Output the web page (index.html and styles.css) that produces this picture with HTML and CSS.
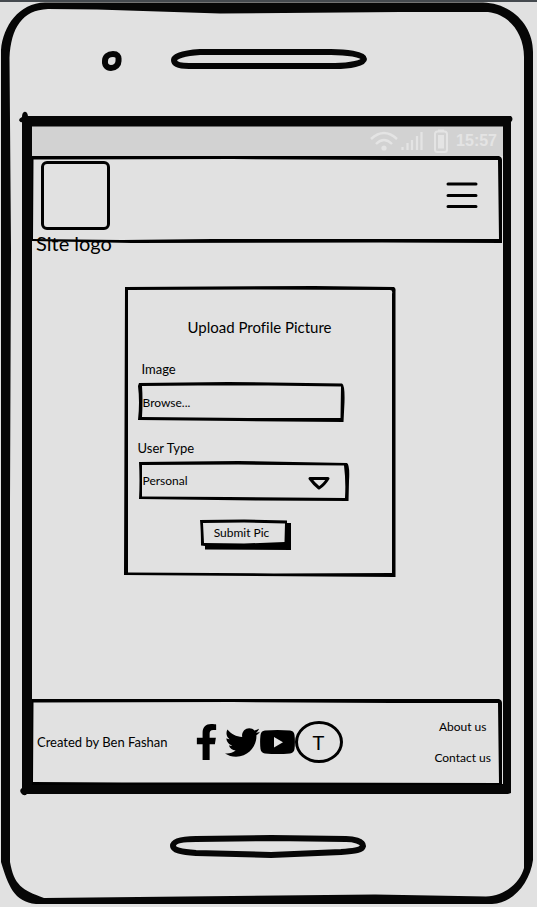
FILE: index.html
```html
<!DOCTYPE html>
<html lang="en">
<head>
<meta charset="utf-8">
<meta name="viewport" content="width=device-width, initial-scale=1">
<title>Upload Profile Picture</title>
<link rel="stylesheet" href="styles.css">
</head>
<body>
<div class="phone">
  <svg class="sketch" viewBox="0 2 537 905" preserveAspectRatio="none" aria-hidden="true">
    <path fill="#060606" fill-rule="evenodd" d="M1 50C3 26 19 3 45 2.500L483 2.500C510 3 533 24 533 52L533 860C530 882 514 903 492 904L36 904C14 902 8 885 1 862ZM9.500 58C11 28 22 10 48 9L97 9.500L220 13.500L400 12L488 12C508 14 524 32 524 57L524 868C520 882 506 896 486 896.500L375 894.500L44 898C22 890 14 885 10 862L10 500L11 250Z"/>
  </svg>

  <div class="bezel bezel-top">
    <svg class="camera" viewBox="0 0 20 20" aria-hidden="true"><path d="M11 3C15 3 17 5 16.500 9C17 14 13 17 9 17C5 17 2.500 14 3 10C3 6 6 3 11 3Z"/></svg>
    <svg class="speaker" viewBox="0 0 197 24" aria-hidden="true"><path d="M30 4C15 5 4 8 4 12C4 16 9 18 19 18L165 18C180 18 194 15 194 11C194 6 175 4 161 4Z"/></svg>
  </div>

  <div class="screen">
    <svg class="sketch" viewBox="0 0 490 678" preserveAspectRatio="none" aria-hidden="true">
      <path fill="#060606" fill-rule="evenodd" d="M0 1Q-4 3-2.500 5Q-1 7 0 6V672Q-3 674-1 677Q2 681 5 678H486L489 677V6Q492 3 489 0H6Q5-5 2-4Q0-3 0 1ZM10 10.500H481V668H10Z"/>
    </svg>

    <div class="status">
      <svg width="28" height="20" viewBox="0 0 28 20" fill="none" stroke="#e4e4e4" stroke-width="2.400" role="img" aria-label="Wi-Fi"><path d="M1 8Q14-4 27 8M6 13Q14 5 22 13"/><circle cx="14" cy="17" r="2.600" fill="#e4e4e4" stroke="none"/></svg>
      <svg class="signal" width="22" height="20" viewBox="0 0 22 20" stroke="#e4e4e4" stroke-width="2.200" role="img" aria-label="Signal"><path d="M1.500 19V16M6.500 19V12M11 19V9M16 19V5M20.500 19V1"/></svg>
      <svg class="battery" width="14" height="24" viewBox="0 0 14 24" role="img" aria-label="Battery"><rect x="1" y="2.500" width="12" height="20.500" rx="2.500" fill="none" stroke="#e4e4e4" stroke-width="2"/><path d="M4 6H10V19.500H4ZM4 .5H10V2.500H4Z" fill="#e4e4e4"/></svg>
      <time>15:57</time>
    </div>

    <header class="site-header">
      <svg class="sketch" viewBox="0 0 470 86" preserveAspectRatio="none" aria-hidden="true">
        <path fill="#000" fill-rule="evenodd" d="M0 0H467Q470 1 470 4V87L350 86.500L100 87L0 85ZM1.500 3.500L200 3L360 4L466 4L467 83L180 83L90 84L1 83Z"/>
      </svg>
      <a class="brand" href="#">
        <span class="logo"></span>
        <span class="brand-name">Site logo</span>
      </a>
      <button class="menu" type="button" aria-label="Menu">
        <svg width="32" height="28" viewBox="0 0 32 28" stroke="#000" stroke-width="3" stroke-linecap="round" aria-hidden="true"><path d="M2 3H30M2 14.500H30M2 25.500H30"/></svg>
      </button>
    </header>

    <main>
      <form class="card">
        <svg class="sketch" viewBox="0 0 272 290" preserveAspectRatio="none" aria-hidden="true">
          <path fill="#000" fill-rule="evenodd" d="M1 1L190 0L270 1Q272 2 271.500 5V290L200 289.500L0 288ZM4 4L130 3.500L266 4Q269 4 268 8V286L150 286.500L4 285.500Z"/>
        </svg>
        <h1>Upload Profile Picture</h1>
        <label class="label-inset" for="image">Image</label>
        <div class="field">
          <svg class="sketch" viewBox="0 0 210 40" preserveAspectRatio="none" aria-hidden="true">
            <path fill="#000" fill-rule="evenodd" d="M1 1L90 0L204 1.500Q207 3 206.500 20L205.500 40L100 39L0 38Q2 20 0 4ZM4 4L60 3.500L130 3.500L203 4.500L202.500 36L110 36L4 35Q5 18 4 4Z"/>
          </svg>
          <input id="image" type="text" value="Browse..." readonly>
        </div>
        <label for="user-type">User Type</label>
        <div class="field">
          <svg class="sketch" viewBox="0 0 210 40" preserveAspectRatio="none" aria-hidden="true">
            <path fill="#000" fill-rule="evenodd" d="M1 1L100 0L209 2Q212 4 211 20L210.500 40L120 39.500L1 38Q2 20 1 1ZM4 4L100 3.500L206 4.500Q208 20 207 37L90 36L4 35.500Q4 20 4 4Z"/>
          </svg>
          <select id="user-type"><option>Personal</option></select>
          <svg class="arrow" viewBox="0 0 24 16" aria-hidden="true"><path d="M3 3.500H21Q17 10 12 13Q7 9 3 3.500Z" fill="none" stroke="#000" stroke-width="3" stroke-linejoin="round"/></svg>
        </div>
        <button class="submit" type="submit">
          <svg class="sketch" viewBox="0 0 92 31" preserveAspectRatio="none" aria-hidden="true">
            <path fill="#000" fill-rule="evenodd" d="M1 1L45 .5L88 1.500V4H92V31L6 30.500V27L2 26.500Q2 12 1 1ZM4 4L45 3.500L86 4.500L85.500 23L45 24.500L5 24Z"/>
          </svg>
          <span>Submit Pic</span>
        </button>
      </form>
    </main>

    <footer>
      <svg class="sketch" viewBox="0 0 470 86" preserveAspectRatio="none" aria-hidden="true">
        <path fill="#000" fill-rule="evenodd" d="M0 0H467Q470 1 470 4V86H0ZM1.500 3.500L200 3L360 4L466 4L467 84L180 83.500L90 83.500L1 83Z"/>
      </svg>
      <p>Created by Ben Fashan</p>
      <nav class="social" aria-label="Social">
        <a class="facebook" href="#" aria-label="Facebook"><svg width="21" height="36" viewBox="18 0 284 512" aria-hidden="true"><path d="M279.140 288l14.220-92.660h-88.910v-60.130c0-25.350 12.420-50.060 52.240-50.060h40.420V6.260S260.430 0 225.360 0c-73.220 0-121.080 44.380-121.080 124.720v70.620H22.890V288h81.390v224h100.170V288z"/></svg></a>
        <a href="#" aria-label="Twitter"><svg width="35" height="35" viewBox="0 0 512 512" aria-hidden="true"><path d="M459.370 151.716c.325 4.548.325 9.097.325 13.645 0 138.720-105.583 298.558-298.558 298.558-59.452 0-114.680-17.219-161.137-47.106 8.447.974 16.568 1.299 25.340 1.299 49.055 0 94.213-16.568 130.274-44.832-46.132-.975-84.792-31.188-98.112-72.772 6.498.974 12.995 1.624 19.818 1.624 9.421 0 18.843-1.300 27.614-3.573-48.081-9.747-84.143-51.980-84.143-102.985v-1.299c13.969 7.797 30.214 12.670 47.431 13.319-28.264-18.843-46.781-51.005-46.781-87.391 0-19.492 5.197-37.360 14.294-52.954 51.655 63.675 129.300 105.258 216.365 109.807-1.624-7.797-2.599-15.918-2.599-24.040 0-57.828 46.782-104.934 104.934-104.934 30.213 0 57.502 12.670 76.670 33.137 23.715-4.548 46.456-13.320 66.599-25.340-7.798 24.366-24.366 44.833-46.132 57.827 21.117-2.273 41.584-8.122 60.426-16.243-14.292 20.791-32.161 39.308-52.628 54.253z"/></svg></a>
        <a href="#" aria-label="YouTube"><svg width="35" height="24" viewBox="0 0 35 24" aria-hidden="true"><path fill-rule="evenodd" d="M5 .6Q17.500-.6 30 .6Q34 1 34.500 5Q35.300 12 34.500 19Q34 23 30 23.400Q17.500 24.600 5 23.400Q1 23 .5 19Q-.3 12 .5 5Q1 1 5 .6ZM14 7V17.500L23 12.200Z"/></svg></a>
        <a class="round" href="#">T</a>
      </nav>
      <nav class="links" aria-label="Site">
        <a href="#">About us</a>
        <a href="#">Contact us</a>
      </nav>
    </footer>
  </div>

  <div class="bezel bezel-bottom">
    <svg class="speaker" viewBox="0 0 197 24" aria-hidden="true"><path d="M26 4C11 4 3 6 3 11C3 15 11 17 26 18L101 20L171 17C186 16 192 15 193 11C193 6 183 4 176 4L101 3Z"/></svg>
  </div>
</div>
</body>
</html>
```
FILE: styles.css
```css
* {
  box-sizing: border-box;
}

body {
  margin: 0;
  min-height: 100vh;
  display: flex;
  flex-direction: column;
  border-top: 2px solid #454a4f;
  background: #e1e1e1;
  color: #000;
  font: 13px/16px Lato, "Liberation Sans", sans-serif;
  font-variant-ligatures: none;
}

svg {
  display: block;
}

a {
  color: inherit;
  text-decoration: none;
}

.sketch {
  position: absolute;
  inset: 0;
  width: 100%;
  height: 100%;
  overflow: visible;
  pointer-events: none;
}

.phone {
  position: relative;
  flex: 1;
  display: flex;
  flex-direction: column;
}

.bezel {
  display: grid;
  grid-template-columns: 1fr auto 1fr;
}

.bezel-top {
  height: 114px;
  padding-top: 46px;
}

.bezel-bottom {
  height: 113px;
  padding-top: 41px;
}

.camera,
.speaker {
  fill: none;
  stroke: #060606;
  stroke-width: 6px;
}

.camera {
  width: 20px;
  margin: 3px 48px 0 0;
  justify-self: end;
}

.speaker {
  width: 197px;
  grid-column: 2;
}

.screen {
  position: relative;
  flex: 1;
  display: flex;
  flex-direction: column;
  margin: 0 25px 0 22px;
  padding: 10px 9px 9px 10px;
}

.status {
  height: 30px;
  padding-right: 6px;
  display: flex;
  align-items: center;
  justify-content: flex-end;
  background: #d2d2d2;
  color: #e4e4e4;
}

.status time {
  font: bold 16px/20px "Liberation Sans", Roboto, sans-serif;
}

.signal {
  margin: 0 11px 0 3px;
}

.battery {
  margin-right: 8px;
}

.site-header {
  position: relative;
  display: flex;
  justify-content: space-between;
  align-items: flex-start;
  margin-right: 1px;
  padding: 5px 24px 0 4px;
}

.menu {
  margin-top: 20px;
}

.brand {
  display: flex;
  flex-direction: column;
  margin-bottom: -13px;
}

.logo {
  width: 69px;
  height: 69px;
  margin: 0 5px 1px;
  border: 3px solid #000;
  border-radius: 6px;
}

.brand-name {
  font-size: 20px;
  line-height: 24px;
}

button {
  padding: 0;
  border: 0;
  background: none;
  color: inherit;
  font: inherit;
}

main {
  flex: 1;
  padding: 44px 32px 44px 16px;
}

.card {
  position: relative;
  display: flex;
  flex-direction: column;
  align-items: flex-start;
  max-width: 272px;
  margin: 0 auto;
  padding: 31px 14px 27px;
}

h1 {
  align-self: center;
  margin: 0 0 24px;
  font-size: 15px;
  line-height: 20px;
  font-weight: normal;
}

.label-inset {
  padding-left: 4px;
}

.field {
  position: relative;
  width: 100%;
  max-width: 210px;
  height: 40px;
  margin: 5px 0 18px;
}

.field input,
.field select {
  width: 100%;
  height: 100%;
  padding: 0 5px;
  border: 0;
  appearance: none;
  background: none;
  color: inherit;
  font: inherit;
  font-size: 12px;
}

.arrow {
  position: absolute;
  top: 14px;
  right: 17px;
  width: 24px;
  pointer-events: none;
}

.submit {
  position: relative;
  align-self: center;
  width: 92px;
  height: 31px;
  padding: 0 6px 4px 0;
  margin-right: 30px;
  font-size: 12px;
}

footer {
  position: relative;
  display: flex;
  align-items: center;
  height: 86px;
  margin-right: 1px;
  padding: 0 11px 0 5px;
}

footer p {
  margin: 0 28px 0 0;
  white-space: nowrap;
}

.social {
  display: flex;
  align-items: center;
}

.facebook {
  margin-right: 8px;
}

.round {
  display: grid;
  place-items: center;
  width: 48px;
  height: 42px;
  border: 3px solid #000;
  border-radius: 50%;
  font-size: 20px;
}

.links {
  display: flex;
  flex-direction: column;
  align-items: center;
  gap: 15px;
  margin-left: auto;
  font-size: 12px;
  white-space: nowrap;
}
```
